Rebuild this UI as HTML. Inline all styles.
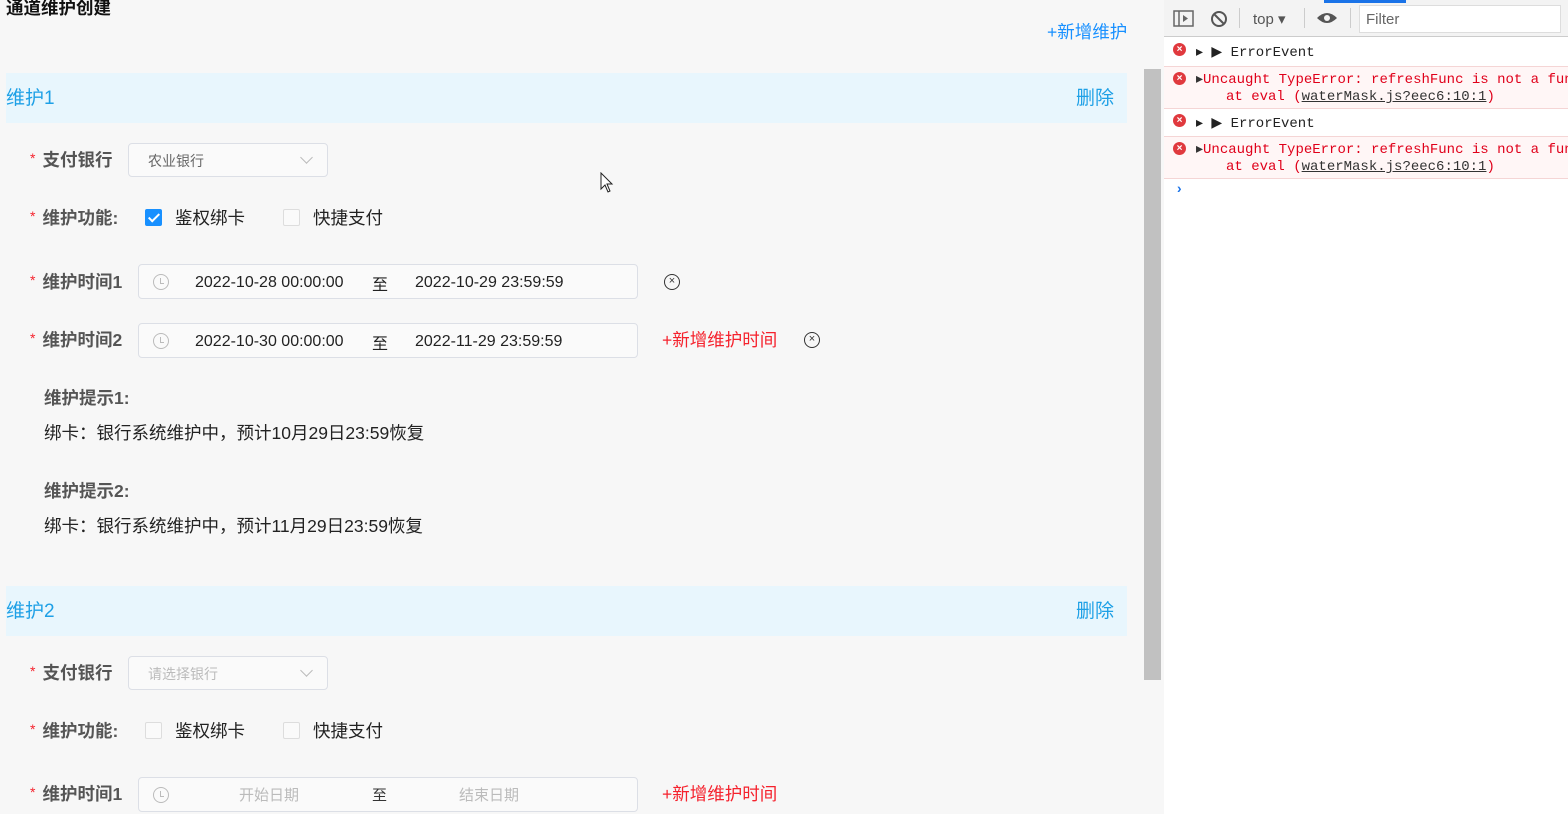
<!DOCTYPE html><html><head><meta charset="utf-8"><style>
*{margin:0;padding:0;box-sizing:border-box}
body{width:1568px;height:814px;overflow:hidden;background:#f7f7f7;font-family:"Liberation Sans","Noto Sans CJK SC",sans-serif;position:relative;color:#222}
.a{position:absolute;white-space:nowrap}
.bar{position:absolute;left:6px;width:1121px;height:50px;background:#e8f6fd}
.bar .t{position:absolute;left:0;top:10px;font-size:19px;color:#1ea0e6}
.bar .d{position:absolute;right:13px;top:10px;font-size:19px;color:#1ea0e6}
.lbl{position:absolute;left:30px;font-size:17.5px;font-weight:bold;color:#555}
.lbl i{color:#f5222d;font-style:normal;font-weight:normal;font-size:14px;margin-right:7px;vertical-align:3px}
.sel{position:absolute;left:128px;width:200px;height:34px;border:1px solid #dcdfe6;border-radius:4px;background:#fafafa;font-size:14px;padding:7px 19px;color:#666}
.sel:after{content:"";position:absolute;right:16px;top:9px;width:8px;height:8px;border-right:1px solid #bbb;border-bottom:1px solid #bbb;transform:rotate(45deg)}
.cb{position:absolute;width:17px;height:17px;border:1px solid #ddd;border-radius:2px;background:#fafafa}
.cb.on{background:#1890ff;border-color:#1890ff}
.cb.on:after{content:"";position:absolute;left:5px;top:1px;width:4px;height:9px;border:solid #fff;border-width:0 2px 2px 0;transform:rotate(45deg)}
.txt{position:absolute;font-size:17.5px;color:#222}
.rng{position:absolute;left:138px;width:500px;height:35px;border:1px solid #dcdfe6;border-radius:4px;background:#fafafa;font-size:16px}
.rng span{position:absolute;top:9px}
.rng span.z{top:6px}
.clk{position:absolute;left:14px;top:9px;width:16px;height:16px;border:1px solid #bbb;border-radius:50%}
.clk:after{content:"";position:absolute;left:6px;top:3px;width:3px;height:5px;border-left:1px solid #bbb;border-bottom:1px solid #bbb}
.x{position:absolute;width:16px;height:16px;border:1.5px solid #333;border-radius:50%;font-size:11px;line-height:13px;text-align:center;color:#333}
.red{position:absolute;font-size:17.5px;color:#f5222d}
.dev{position:absolute;left:1164px;top:0;width:404px;height:814px;background:#fff;font-family:"Liberation Mono",monospace;font-size:14px}
.row{position:absolute;left:0;width:404px;border-bottom:1px solid #f5d5d5}
.err{position:absolute;left:9px;width:13px;height:13px;border-radius:50%;background:#e0393e;color:#fff;font-size:10px;line-height:13px;text-align:center;font-family:"Liberation Sans",sans-serif;font-weight:bold}
</style></head><body>
<div class="a" style="left:6px;top:-5px;font-size:17.5px;font-weight:bold;color:#111">通道维护创建</div>
<div class="a" style="left:1047px;top:19px;font-size:17.5px;color:#1890ff">+新增维护</div>
<div class="a" style="left:1144px;top:69px;width:17px;height:611px;background:#c1c1c1"></div>

<div class="bar" style="top:73px"><span class="t">维护1</span><span class="d">删除</span></div>
<div class="lbl" style="top:147px"><i>*</i>支付银行</div>
<div class="sel" style="top:143px">农业银行</div>
<div class="lbl" style="top:205px"><i>*</i>维护功能:</div>
<div class="cb on" style="left:145px;top:209px"></div><div class="txt" style="left:175px;top:205px">鉴权绑卡</div>
<div class="cb" style="left:283px;top:209px"></div><div class="txt" style="left:313px;top:205px">快捷支付</div>
<div class="lbl" style="top:269px"><i>*</i>维护时间1</div>
<div class="rng" style="top:264px"><div class="clk"></div><span style="left:56px">2022-10-28 00:00:00</span><span class="z" style="left:233px">至</span><span style="left:276px">2022-10-29 23:59:59</span></div>
<div class="x" style="left:664px;top:274px">×</div>
<div class="lbl" style="top:327px"><i>*</i>维护时间2</div>
<div class="rng" style="top:323px"><div class="clk"></div><span style="left:56px">2022-10-30 00:00:00</span><span class="z" style="left:233px">至</span><span style="left:276px">2022-11-29 23:59:59</span></div>
<div class="red" style="left:662px;top:327px">+新增维护时间</div>
<div class="x" style="left:804px;top:332px">×</div>
<div class="a" style="left:44px;top:385px;font-size:17.5px;font-weight:bold;color:#555">维护提示1:</div>
<div class="txt" style="left:44px;top:420px">绑卡：银行系统维护中，预计10月29日23:59恢复</div>
<div class="a" style="left:44px;top:478px;font-size:17.5px;font-weight:bold;color:#555">维护提示2:</div>
<div class="txt" style="left:44px;top:513px">绑卡：银行系统维护中，预计11月29日23:59恢复</div>

<div class="bar" style="top:586px"><span class="t">维护2</span><span class="d">删除</span></div>
<div class="lbl" style="top:660px"><i>*</i>支付银行</div>
<div class="sel" style="top:656px;color:#bbb">请选择银行</div>
<div class="lbl" style="top:718px"><i>*</i>维护功能:</div>
<div class="cb" style="left:145px;top:722px"></div><div class="txt" style="left:175px;top:718px">鉴权绑卡</div>
<div class="cb" style="left:283px;top:722px"></div><div class="txt" style="left:313px;top:718px">快捷支付</div>
<div class="lbl" style="top:781px"><i>*</i>维护时间1</div>
<div class="rng" style="top:777px;color:#bbb;font-size:15px"><div class="clk"></div><span class="z" style="left:100px">开始日期</span><span class="z" style="left:233px;color:#333">至</span><span class="z" style="left:320px">结束日期</span></div>
<div class="red" style="left:662px;top:781px">+新增维护时间</div>

<svg class="a" style="left:599px;top:172px" width="16" height="22"><path d="M2 1 L2 17 L6 13 L9 20 L11 19 L8 12 L13 12 Z" fill="#fff" stroke="#222"/></svg>

<div class="dev">
<div class="a" style="left:0;top:0;width:404px;height:37px;background:#f3f3f3;border-bottom:1px solid #ccc"></div>
<div class="a" style="left:160px;top:0;width:82px;height:3px;background:#1a73e8"></div>
<svg class="a" style="left:9px;top:10px" width="22" height="18"><rect x="1" y="1" width="19" height="15" fill="none" stroke="#666" stroke-width="1.5"/><line x1="6" y1="1" x2="6" y2="16" stroke="#666" stroke-width="1.5"/><path d="M10 5 L15 8.5 L10 12Z" fill="#666"/></svg>
<svg class="a" style="left:46px;top:10px" width="18" height="18"><circle cx="9" cy="9" r="7" fill="none" stroke="#555" stroke-width="2"/><line x1="4" y1="4" x2="14" y2="14" stroke="#555" stroke-width="2"/></svg>
<div class="a" style="left:75px;top:8px;width:1px;height:20px;background:#ccc"></div>
<div class="a" style="left:89px;top:10px;font-family:'Liberation Sans',sans-serif;font-size:15px;color:#555">top ▾</div>
<div class="a" style="left:140px;top:8px;width:1px;height:20px;background:#ccc"></div>
<svg class="a" style="left:152px;top:11px" width="22" height="14"><path d="M1 7 Q11 -3 21 7 Q11 17 1 7Z" fill="#555"/><circle cx="11" cy="7" r="3" fill="#f3f3f3"/></svg>
<div class="a" style="left:186px;top:8px;width:1px;height:20px;background:#ccc"></div>
<div class="a" style="left:195px;top:5px;width:202px;height:28px;background:#fff;border:1px solid #ddd;font-family:'Liberation Sans',sans-serif;font-size:15px;color:#666;padding:5px 6px">Filter</div>
<div class="row" style="top:38px;height:29px"><div class="err" style="top:5px">×</div><div class="a" style="left:32px;top:6px;color:#222">▸ ▶ ErrorEvent</div></div>
<div class="row" style="top:67px;height:42px;background:#fff6f6"><div class="err" style="top:5px">×</div><div class="a" style="left:32px;top:4px;color:#e0001a"><span style="color:#333">▸</span>Uncaught TypeError: refreshFunc is not a fun</div><div class="a" style="left:62px;top:22px;color:#e0001a">at eval (<u style="color:#333">waterMask.js?eec6:10:1</u>)</div></div>
<div class="row" style="top:109px;height:28px"><div class="err" style="top:5px">×</div><div class="a" style="left:32px;top:6px;color:#222">▸ ▶ ErrorEvent</div></div>
<div class="row" style="top:137px;height:42px;background:#fff6f6"><div class="err" style="top:5px">×</div><div class="a" style="left:32px;top:4px;color:#e0001a"><span style="color:#333">▸</span>Uncaught TypeError: refreshFunc is not a fun</div><div class="a" style="left:62px;top:22px;color:#e0001a">at eval (<u style="color:#333">waterMask.js?eec6:10:1</u>)</div></div>
<div class="a" style="left:11px;top:182px;color:#1a73e8;font-weight:bold">›</div>
</div>
</body></html>
